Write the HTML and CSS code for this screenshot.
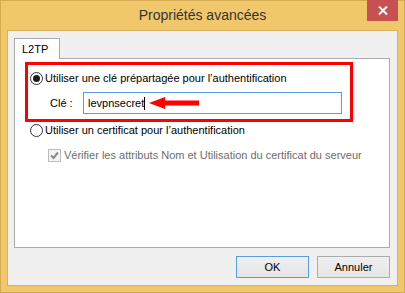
FILE: index.html
```html
<!DOCTYPE html>
<html lang="fr">

<head>
  <meta charset="UTF-8">
  <meta name="viewport" content="width=device-width, initial-scale=1.0">
  <title>Propriétés avancées</title>
  <link rel="stylesheet" href="styles.css">
</head>

<body>
  <div class="window">
    <div class="titlebar">
      <h1 class="title">Propriétés avancées</h1>
      <button class="close" aria-label="Fermer">
        <svg width="10" height="9" viewBox="0 0 10 9">
          <path d="M1 0.5 L9 8.5 M9 0.5 L1 8.5" stroke="#fff" stroke-width="2" />
        </svg>
      </button>
    </div>

    <div class="client">
      <div class="tab">L2TP</div>

      <div class="panel">
        <div class="highlight">
          <div class="option">
            <span class="radio checked"></span>
            <span>Utiliser une clé prépartagée pour l’authentification</span>
          </div>
          <div class="key-row">
            <span class="key-label">Clé :</span>
            <div class="input">
              <span>levpnsecret</span>
              <span class="caret"></span>
              <svg class="arrow" width="50" height="12" viewBox="0 0 50 12">
                <polygon points="0,6 16,0 16,3.5 50,3.5 50,8.5 16,8.5 16,12" fill="#f00" />
              </svg>
            </div>
          </div>
        </div>

        <div class="option second">
          <span class="radio"></span>
          <span>Utiliser un certificat pour l’authentification</span>
        </div>

        <div class="option sub disabled">
          <span class="checkbox">
            <svg width="11" height="11" viewBox="0 0 11 11">
              <polyline points="2,5.5 4.5,8 9,2.5" fill="none" stroke="#8a8a8a" stroke-width="2" />
            </svg>
          </span>
          <span>Vérifier les attributs Nom et Utilisation du certificat du serveur</span>
        </div>
      </div>

      <div class="buttons">
        <button class="btn btn-default">OK</button>
        <button class="btn">Annuler</button>
      </div>
    </div>
  </div>
</body>

</html>
```

FILE: styles.css
```css
* {
  box-sizing: border-box;
}

body {
  margin: 0;
  font-family: 'Liberation Sans', Arial, sans-serif;
  font-size: 11px;
  line-height: 15px;
  color: #000;
}

.window {
  width: 405px;
  height: 293px;
  border: 1px solid #d4ab50;
  background: #f0c86b;
  display: flex;
  flex-direction: column;
}

/* title bar */

.titlebar {
  height: 29px;
  flex: none;
  display: grid;
  grid-template-columns: 1fr auto 1fr;
  align-items: start;
  padding: 0 6px;
}

.title {
  grid-column: 2;
  margin: 0;
  font-size: 14px;
  font-weight: normal;
  line-height: 29px;
  color: #333;
}

.close {
  grid-column: 3;
  justify-self: end;
  width: 31px;
  height: 21px;
  margin-top: -1px;
  border: none;
  padding: 0;
  background: #c75050;
  display: flex;
  align-items: center;
  justify-content: center;
}

/* client area */

.client {
  flex: 1;
  margin: 0 6px 6px;
  border: 1px solid #d6b05a;
  background: #f0f0f0;
  padding: 7px 7px 7px 6px;
  display: flex;
  flex-direction: column;
}

.tab {
  align-self: flex-start;
  width: 46px;
  height: 21px;
  border: 1px solid #acacac;
  border-bottom: none;
  background: #fff;
  padding-left: 7px;
  line-height: 20px;
  margin-bottom: -1px;
  position: relative;
  z-index: 1;
}

.panel {
  flex: 1;
  border: 1px solid #acacac;
  background: #fff;
}

.highlight {
  width: 328px;
  height: 60px;
  margin: 3px 0 0 10px;
  border: 3px solid #f00;
  padding: 6px 0 0 2px;
}

.option {
  display: flex;
  align-items: center;
  height: 15px;
  gap: 2px;
  white-space: nowrap;
}

.radio {
  width: 13px;
  height: 13px;
  border: 1px solid #333;
  border-radius: 50%;
  background: #fff;
  display: flex;
  align-items: center;
  justify-content: center;
}

.radio.checked::after {
  content: '';
  width: 7px;
  height: 7px;
  border-radius: 50%;
  background: #1b1b1b;
}

.key-row {
  display: flex;
  align-items: center;
  height: 22px;
  margin-top: 6px;
}

.key-label {
  width: 33px;
  margin-left: 20px;
}

.input {
  width: 259px;
  height: 22px;
  border: 1px solid #569de5;
  background: #fff;
  padding-left: 4px;
  display: flex;
  align-items: center;
}

.caret {
  width: 1px;
  height: 13px;
  background: #000;
}

.arrow {
  margin-left: 4px;
}

.option.second {
  margin: 1px 0 0 15px;
}

.option.sub {
  margin: 10px 0 0 33px;
  gap: 3px;
}

.disabled {
  color: #6d6d6d;
}

.checkbox {
  width: 13px;
  height: 13px;
  border: 1px solid #bcbcbc;
  background: #f4f4f4;
  display: flex;
  align-items: center;
  justify-content: center;
}

/* buttons */

.buttons {
  display: flex;
  justify-content: flex-end;
  gap: 8px;
  margin-top: 8px;
}

.btn {
  width: 73px;
  height: 22px;
  border: 1px solid #acacac;
  background: linear-gradient(#efefef, #e5e5e5);
  font: inherit;
  color: #000;
  padding: 0;
}

.btn-default {
  border-color: #569de5;
}
```
